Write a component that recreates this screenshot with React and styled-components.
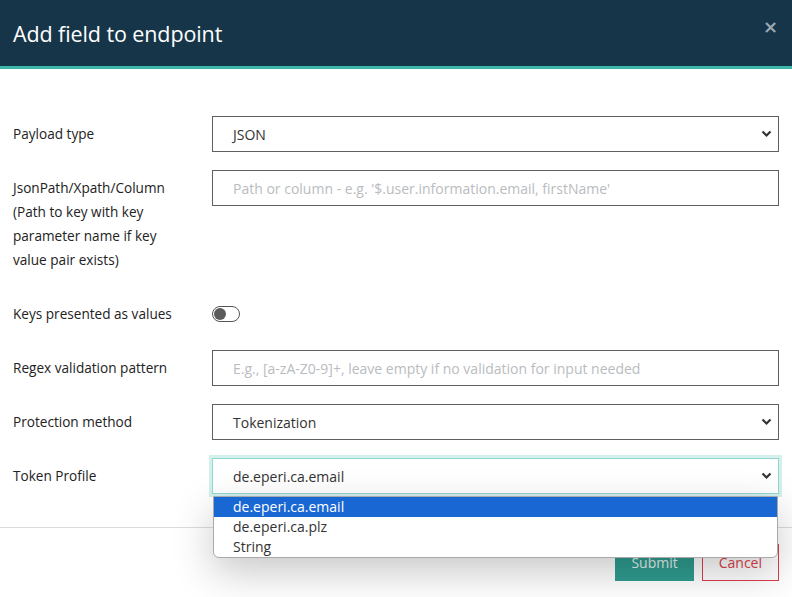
import React from 'react';
import styled, { createGlobalStyle } from 'styled-components';

const GlobalStyle = createGlobalStyle`
  html, body {
    margin: 0;
    padding: 0;
    background: #ffffff;
    font-family: "Open Sans", "Noto Sans", "Liberation Sans", sans-serif;
  }
`;

const Modal = styled.div`
  width: 792px;
  height: 597px;
  overflow: hidden;
  background: #fff;
  display: flex;
  flex-direction: column;
`;

const Header = styled.div`
  height: 66px;
  background: #163549;
  border-bottom: 3px solid #3cb6aa;
  display: flex;
  align-items: center;
  justify-content: space-between;
  padding: 0 13px;
  flex-shrink: 0;
`;

const Title = styled.h4`
  margin: 0;
  color: #fff;
  font-size: 21.5px;
  font-weight: 500;
  letter-spacing: -0.1px;
`;

const Close = styled.button`
  border: none;
  background: none;
  padding: 0;
  margin-top: -12px;
  margin-right: 1px;
  color: #9aa7b1;
  font-size: 18px;
  font-weight: 700;
  line-height: 1;
  cursor: pointer;
  font-family: "DejaVu Sans", sans-serif;
`;

const Body = styled.div`
  padding: 47px 13px 33px;
  display: flex;
  flex-direction: column;
  gap: 18px;
`;

const Row = styled.div`
  display: grid;
  grid-template-columns: 199px 1fr;
  align-items: start;
`;

const Label = styled.label`
  font-size: 13.6px;
  line-height: 24px;
  padding: 6px 0;
  color: #222;
`;

const Field = styled.div`
  position: relative;
  height: 36px;
  box-sizing: border-box;
  border: 1px solid ${p => (p.$focused ? '#93d8cf' : '#5f5f5f')};
  box-shadow: ${p => (p.$focused ? '0 0 0 3px #d3f0ec' : 'none')};
  display: flex;
  align-items: center;
  padding: 0 20px;
  font-size: 14px;
  color: ${p => (p.$placeholder ? '#b9bcc0' : '#333')};
`;

const Chevron = styled.svg`
  position: absolute;
  right: 6px;
  top: 50%;
  margin-top: -4px;
`;

const ToggleWrap = styled.div`
  height: 36px;
  display: flex;
  align-items: center;
`;

const Toggle = styled.span`
  width: 28px;
  height: 16px;
  box-sizing: border-box;
  border: 1px solid #555;
  border-radius: 8px;
  display: flex;
  align-items: center;
  padding-left: 1px;

  &::before {
    content: "";
    width: 12px;
    height: 12px;
    border-radius: 50%;
    background: #5b5b5b;
  }
`;

const Menu = styled.ul`
  position: absolute;
  left: 0;
  right: 0;
  top: 37px;
  margin: 0;
  padding: 0;
  list-style: none;
  background: #fff;
  border: 1px solid #a9a9a9;
  border-radius: 0 0 6px 6px;
  box-shadow: 0 14px 40px rgba(0, 0, 0, 0.22);
  overflow: hidden;
  z-index: 10;
`;

const Option = styled.li`
  height: 20px;
  line-height: 20px;
  padding-left: 19px;
  font-size: 14px;
  color: ${p => (p.$active ? '#fff' : '#333')};
  background: ${p => (p.$active ? '#1967d2' : 'transparent')};
`;

const Footer = styled.div`
  border-top: 1px solid #dcdcdc;
  padding: 16px 13px;
  display: flex;
  justify-content: flex-end;
  gap: 8px;
`;

const Button = styled.button`
  height: 37px;
  padding: 0 ${p => (p.$danger ? '16px' : '15px')};
  font-family: inherit;
  font-size: 14px;
  border: 1px solid ${p => (p.$danger ? '#dc3f4b' : '#2f9c90')};
  background: ${p => (p.$danger ? '#fff' : '#2f9c90')};
  color: ${p => (p.$danger ? '#dc3f4b' : '#e6f4f2')};
  cursor: pointer;
`;

const ChevronIcon = () => (
  <Chevron width="11" height="8" viewBox="0 0 11 8">
    <path d="M1.5 1.5 L5.5 5.5 L9.5 1.5" fill="none" stroke="#333" strokeWidth="2.2" />
  </Chevron>
);

const App = () => {
  return (
    <>
      <GlobalStyle />
      <Modal>
        <Header>
          <Title>Add field to endpoint</Title>
          <Close>×</Close>
        </Header>
        <Body>
          <Row>
            <Label>Payload type</Label>
            <Field>JSON<ChevronIcon /></Field>
          </Row>
          <Row>
            <Label>
              JsonPath/Xpath/Column<br />
              (Path to key with key<br />
              parameter name if key<br />
              value pair exists)
            </Label>
            <Field $placeholder>Path or column - e.g. '$.user.information.email, firstName'</Field>
          </Row>
          <Row>
            <Label>Keys presented as values</Label>
            <ToggleWrap><Toggle /></ToggleWrap>
          </Row>
          <Row>
            <Label>Regex validation pattern</Label>
            <Field $placeholder>E.g., [a-zA-Z0-9]+, leave empty if no validation for input needed</Field>
          </Row>
          <Row>
            <Label>Protection method</Label>
            <Field>Tokenization<ChevronIcon /></Field>
          </Row>
          <Row>
            <Label>Token Profile</Label>
            <Field $focused>
              de.eperi.ca.email<ChevronIcon />
              <Menu>
                <Option $active>de.eperi.ca.email</Option>
                <Option>de.eperi.ca.plz</Option>
                <Option>String</Option>
              </Menu>
            </Field>
          </Row>
        </Body>
        <Footer>
          <Button>Submit</Button>
          <Button $danger>Cancel</Button>
        </Footer>
      </Modal>
    </>
  );
};

export default App;
